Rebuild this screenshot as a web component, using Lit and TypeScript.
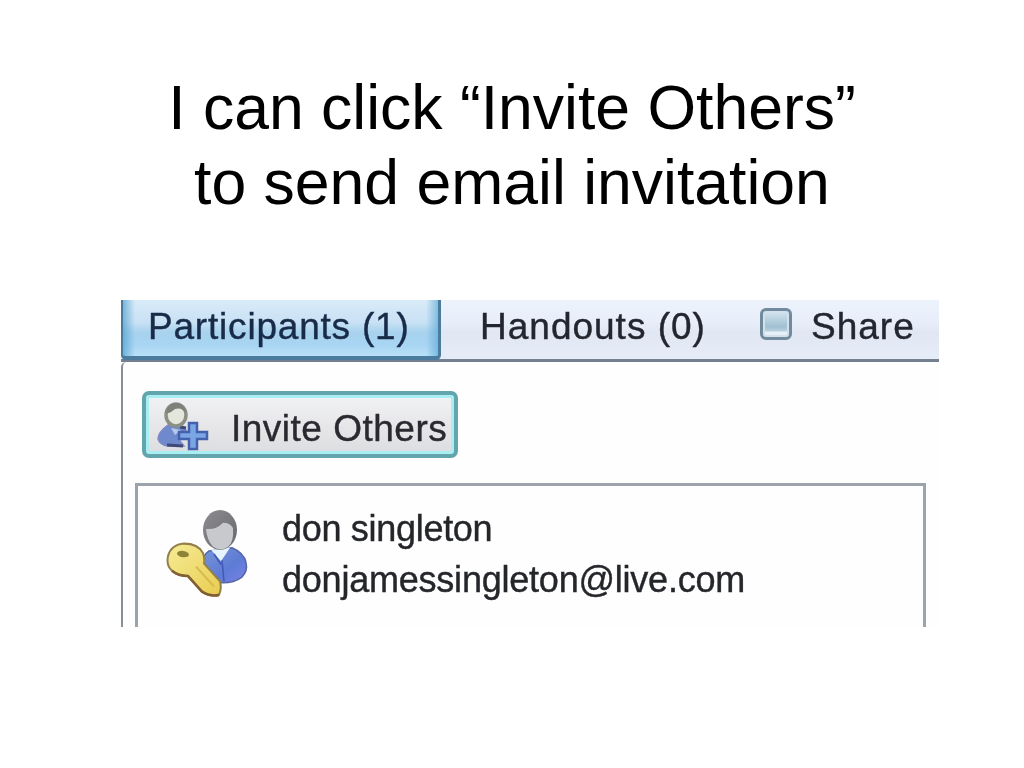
import { css, html, LitElement } from 'lit'
import { customElement, property } from 'lit/decorators.js'

@customElement('participant-row')
export class ParticipantRow extends LitElement {
  static styles = css`
    :host {
      display: flex;
      gap: 32px;
    }
    .avatar {
      display: block;
      flex: none;
      width: 84px;
      height: 90px;
      margin-top: 5px;
    }
    .details {
      display: flex;
      flex-direction: column;
      font-size: 36px;
      line-height: 51px;
      white-space: nowrap;
      -webkit-text-stroke: 0.4px #24262a;
    }
    .name {
      letter-spacing: -0.3px;
    }
    .email {
      letter-spacing: -0.22px;
    }
  `

  @property()
  name = ''

  @property()
  email = ''

  render() {
    return html`
      <svg class="avatar" viewBox="0 0 84 86" preserveAspectRatio="none">
        <defs>
          <linearGradient id="hair" x1="0" y1="0" x2="1" y2="1">
            <stop offset="0" stop-color="#8d8d91" />
            <stop offset="1" stop-color="#66676c" />
          </linearGradient>
          <linearGradient id="coat" x1="0" y1="0" x2="1" y2="1">
            <stop offset="0" stop-color="#7796d4" />
            <stop offset="0.6" stop-color="#5e7bd6" />
            <stop offset="1" stop-color="#7c82e6" />
          </linearGradient>
          <linearGradient id="key" x1="0" y1="0" x2="1" y2="1">
            <stop offset="0" stop-color="#f6ec96" />
            <stop offset="1" stop-color="#e8cc50" />
          </linearGradient>
        </defs>
        <path
          d="M43 41 Q35 46 36 57 Q38 69 50 71 Q66 73 76 66 Q82 60 80 52 Q78 43 66 38 Z"
          fill="url(#coat)"
          stroke="#5565a8"
          stroke-width="1.5"
        />
        <path d="M45 40 L55 51 L64 38 Z" fill="#e6f4ff" />
        <path d="M56 50 L58 70 M48 44 L55 54" fill="none" stroke="#4058b4" stroke-width="1.5" />
        <ellipse cx="54" cy="21" rx="17" ry="19" fill="url(#hair)" />
        <path d="M40 20 Q50 21 57 14 Q64 14 67 19 Q68 33 62 37 Q55 42 47 37 Q41 31 40 20 Z" fill="#c8c9cd" />
        <path
          d="M2 46 Q5 35 18 34 Q32 34 37 43 Q39 49 38 53 L54 70 Q56 77 53 83 Q44 85 36 80 L22 65 Q12 65 6 60 Q0 55 2 46 Z"
          fill="url(#key)"
          stroke="#938048"
          stroke-width="2"
        />
        <path d="M6 60 Q12 65 22 65 L36 80 Q44 85 53 83" fill="none" stroke="#805f34" stroke-width="2.5" />
        <path d="M30 56 L48 75" stroke="#d6ba50" stroke-width="2" />
        <ellipse cx="17" cy="44" rx="6" ry="3" fill="#8c8338" transform="rotate(8 17 44)" />
      </svg>
      <div class="details">
        <span class="name">${this.name}</span>
        <span class="email">${this.email}</span>
      </div>
    `
  }
}

@customElement('app-root')
export class AppRoot extends LitElement {
  static styles = css`
    :host {
      display: flex;
      flex-direction: column;
      box-sizing: border-box;
      width: 1024px;
      height: 768px;
      padding-top: 70px;
      overflow: hidden;
      background: #fff;
      color: #000;
      font-family: 'Liberation Sans', Arial, sans-serif;
    }
    .title {
      height: 230px;
      margin: 0;
      font-size: 62.5px;
      font-weight: 400;
      line-height: 75px;
      text-align: center;
      white-space: nowrap;
    }
    .meeting {
      display: flex;
      flex-direction: column;
      width: 818px;
      height: 327px;
      margin-left: 121px;
      overflow: hidden;
      color: #23262f;
    }
    .soft {
      display: flex;
      flex-direction: column;
      flex: 1;
      filter: blur(0.6px);
    }

    /* Tabs */
    .tabs {
      display: flex;
      box-sizing: border-box;
      height: 62px;
      border-bottom: 3px solid #74808f;
      background: linear-gradient(#edf3fd 0%, #e8eef9 38%, #e0e7f3 55%, #e6edf9 100%);
      font-size: 37px;
      line-height: 54px;
      white-space: nowrap;
      -webkit-text-stroke: 0.4px currentColor;
    }
    .tab.active {
      box-sizing: border-box;
      width: 320px;
      height: 60px;
      padding-left: 25px;
      border: solid #4b7c9e;
      border-width: 0 3px 4px 2px;
      border-radius: 0 0 5px 5px;
      background:
        linear-gradient(90deg, rgb(82 160 206 / 0.7), transparent 12px calc(100% - 12px), rgb(98 172 214 / 0.7)),
        linear-gradient(#d9ebf8 0%, #c8e1f4 40%, #a8d2ee 58%, #a8d5f3 80%, #b9e0f7 100%);
      color: #182c49;
      letter-spacing: 0.8px;
    }
    .tab.handouts {
      width: 280px;
      padding-left: 39px;
      letter-spacing: 1px;
    }
    .tab.share {
      display: flex;
      gap: 19px;
      letter-spacing: 1px;
    }
    .share-icon {
      box-sizing: border-box;
      width: 32px;
      height: 32px;
      margin-top: 8px;
      border: 3px solid #718a9e;
      border-radius: 6px;
      background: linear-gradient(#d6e5ef, #a0c0d3 60%, #b5cedc 75%, #e5eff5 82%);
      box-shadow: inset 0 0 0 2px #d2e1eb;
    }

    /* Body */
    .body {
      display: flex;
      flex-direction: column;
      flex: 1;
      padding: 29px 13px 0 12px;
      border-left: 2px solid #898f99;
      border-top-left-radius: 5px;
      background: #fefefe;
    }
    .invite {
      display: flex;
      align-items: center;
      box-sizing: border-box;
      width: 316px;
      height: 67px;
      margin-left: 7px;
      padding: 0 0 0 10px;
      gap: 19px;
      border: 4px solid #62a5ac;
      border-radius: 7px;
      background: linear-gradient(#f1f2f3, #e7e7e9 50%, #dcdde0);
      box-shadow: inset 0 0 0 3px #a8eef2;
      color: #2b2930;
      font: inherit;
      font-size: 37px;
      letter-spacing: 0.5px;
      white-space: nowrap;
      -webkit-text-stroke: 0.4px #2b2930;
    }
    .invite-icon {
      display: block;
      flex: none;
      width: 56px;
      height: 52px;
    }
    .invite-label {
      padding-top: 9px;
    }
    .list {
      flex: 1;
      margin-top: 25px;
      padding: 17px 0 0 28px;
      border: 3px solid #9ca3aa;
      border-bottom: 0;
      color: #24262a;
    }
  `

  render() {
    return html`
      <h1 class="title">I can click “Invite Others”<br />to send email invitation</h1>
      <section class="meeting">
        <div class="soft">
          <nav class="tabs">
            <div class="tab active">Participants (1)</div>
            <div class="tab handouts">Handouts (0)</div>
            <div class="tab share">
              <span class="share-icon"></span>
              <span>Share</span>
            </div>
          </nav>
          <div class="body">
            <button class="invite">
              <svg class="invite-icon" viewBox="0 0 56 52">
                <path
                  d="M12 26 Q2 33 2 40 Q4 46 12 47 L28 47 L24 42 L24 36 L30 31 L26 27 Z"
                  fill="#6f89cd"
                  stroke="#7f8ac4"
                  stroke-width="1.5"
                />
                <path d="M15 29 L19 36 L25 31 Z" fill="#b4c8ea" />
                <path d="M11 46 L27 47 M24 28 L30 29" stroke="#3f4b76" stroke-width="3" />
                <ellipse cx="20" cy="16" rx="10" ry="11" fill="#e4e6dc" stroke="#8b9086" stroke-width="3.5" />
                <path d="M10 15 Q15 14 19 10 Q26 8 30 14 Q29 4 20 4 Q11 4 10 15 Z" fill="#7d817a" />
                <path
                  d="M33 24 H41 V33 H51 V40 H41 V50 H33 V40 H23 V33 H33 Z"
                  fill="#7aa6e4"
                  stroke="#4461ad"
                  stroke-width="2.5"
                />
              </svg>
              <span class="invite-label">Invite Others</span>
            </button>
            <div class="list">
              <participant-row name="don singleton" email="donjamessingleton@live.com"></participant-row>
            </div>
          </div>
        </div>
      </section>
    `
  }
}

declare global {
  interface HTMLElementTagNameMap {
    'app-root': AppRoot
    'participant-row': ParticipantRow
  }
}
